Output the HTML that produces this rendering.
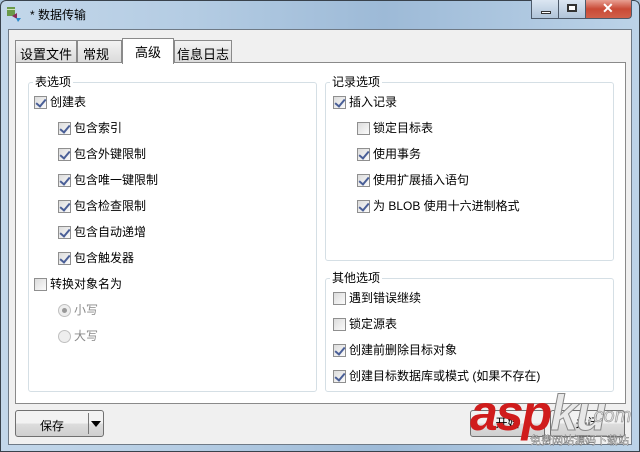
<!DOCTYPE html>
<html><head><meta charset="utf-8"><style>
*{margin:0;padding:0;box-sizing:border-box}
body{width:640px;height:452px;overflow:hidden;background:#a9c4dc;font-family:"Liberation Sans","Noto Sans CJK SC",sans-serif;font-size:12px;color:#000;position:relative}
.abs{position:absolute}
#win{left:0;top:0;width:640px;height:452px;background:linear-gradient(90deg,#c3d7ea 0%,#b4cce3 30%,#9dbad7 60%,#bcd3e8 100%);border:1px solid #39424c;border-radius:6px 6px 0 0}
#client{left:8px;top:29px;width:624px;height:416px;background:#f0f0f0;border:1px solid #6f7a86}
.tab{position:absolute;top:40px;height:23px;background:linear-gradient(#f3f3f3,#dadada);border:1px solid #8a8a8a;border-bottom:none;padding-top:3px;text-align:center;font-size:13px;white-space:nowrap}
#panel{left:15px;top:62px;width:611px;height:342px;background:#fff;border:1px solid #8a8a8a}
.grp{position:absolute;border:1px solid #d5dfe5;border-radius:3px}
.gl{position:absolute;background:#fff;padding:0 2px;font-size:12px;line-height:14px}
.cb{position:absolute;width:13px;height:13px;border:1px solid #8f8f8f;background:linear-gradient(135deg,#dcdcdc,#fbfbfb)}
.cb.c::after{content:"";position:absolute;left:3px;top:0px;width:4px;height:8px;border:solid #4a5f97;border-width:0 2px 2px 0;transform:rotate(40deg)}
.lb{position:absolute;font-size:12px;line-height:14px;white-space:nowrap}
.rd{position:absolute;width:13px;height:13px;border-radius:50%;border:1px solid #c0c0c0;background:#eee}
.btn{position:absolute;border:1px solid #707070;border-radius:3px;background:linear-gradient(#f2f2f2 50%,#dddddd 50%,#cfcfcf);font-size:12px;text-align:center}
.wb{position:absolute;top:0;height:19px;border:1px solid #4d5a6a;border-top:none}
</style></head><body>
<div id="win" class="abs"></div>
<svg class="abs" style="left:6px;top:6px" width="18" height="18"><rect x="1" y="1" width="8" height="9" fill="#6a9a4a"/><rect x="1" y="3" width="8" height="1" fill="#cfe3b5"/><path d="M6 10l5-3v6z" fill="#8a2a5a"/><path d="M10 12h5l-3 4z" fill="#2a8acb"/></svg>
<div class="abs" style="left:30px;top:6px;font-size:12px">* 数据传输</div>
<div class="wb" style="left:531px;width:28px;background:linear-gradient(#dbe6f2,#b0c4d9)"><div class="abs" style="left:9px;top:11px;width:10px;height:3px;border:1px solid #333;background:#fff"></div></div>
<div class="wb" style="left:559px;width:27px;border-left:none;background:linear-gradient(#dbe6f2,#b0c4d9)"><div class="abs" style="left:8px;top:4px;width:10px;height:8px;border:2px solid #333;background:#fff"></div></div>
<div class="wb" style="left:586px;width:46px;border-left:none;border-radius:0 0 4px 0;background:linear-gradient(#e8a093,#c94a36 50%,#d0604a)"><div class="abs" style="left:16px;top:0;color:#fff;font-weight:bold;font-size:14px">✕</div></div>
<div id="client" class="abs"></div>
<div class="tab" style="left:15px;width:62px">设置文件</div>
<div class="tab" style="left:77px;width:45px;text-align:left;padding-left:5px">常规</div>
<div class="tab" style="left:174px;width:58px">信息日志</div>
<div id="panel" class="abs"></div>
<div class="tab" style="left:122px;top:38px;width:52px;height:26px;background:#fff;padding:3px 0 0 0;z-index:2">高级</div>

<div class="grp" style="left:28px;top:82px;width:289px;height:310px"></div>
<div class="gl" style="left:33px;top:75px">表选项</div>
<div class="grp" style="left:325px;top:82px;width:289px;height:179px"></div>
<div class="gl" style="left:330px;top:75px">记录选项</div>
<div class="grp" style="left:325px;top:278px;width:289px;height:114px"></div>
<div class="gl" style="left:330px;top:271px">其他选项</div>

<div class="cb c" style="left:34px;top:96px"></div><div class="lb" style="left:50px;top:95px">创建表</div>
<div class="cb c" style="left:58px;top:122px"></div><div class="lb" style="left:74px;top:121px">包含索引</div>
<div class="cb c" style="left:58px;top:148px"></div><div class="lb" style="left:74px;top:147px">包含外键限制</div>
<div class="cb c" style="left:58px;top:174px"></div><div class="lb" style="left:74px;top:173px">包含唯一键限制</div>
<div class="cb c" style="left:58px;top:200px"></div><div class="lb" style="left:74px;top:199px">包含检查限制</div>
<div class="cb c" style="left:58px;top:226px"></div><div class="lb" style="left:74px;top:225px">包含自动递增</div>
<div class="cb c" style="left:58px;top:252px"></div><div class="lb" style="left:74px;top:251px">包含触发器</div>
<div class="cb" style="left:34px;top:278px"></div><div class="lb" style="left:50px;top:277px">转换对象名为</div>
<div class="rd" style="left:58px;top:304px"><div class="abs" style="left:3px;top:3px;width:5px;height:5px;border-radius:50%;background:#999"></div></div><div class="lb" style="left:74px;top:303px;color:#8a8a8a">小写</div>
<div class="rd" style="left:58px;top:330px"></div><div class="lb" style="left:74px;top:329px;color:#8a8a8a">大写</div>

<div class="cb c" style="left:333px;top:96px"></div><div class="lb" style="left:349px;top:95px">插入记录</div>
<div class="cb" style="left:357px;top:122px"></div><div class="lb" style="left:373px;top:121px">锁定目标表</div>
<div class="cb c" style="left:357px;top:148px"></div><div class="lb" style="left:373px;top:147px">使用事务</div>
<div class="cb c" style="left:357px;top:174px"></div><div class="lb" style="left:373px;top:173px">使用扩展插入语句</div>
<div class="cb c" style="left:357px;top:200px"></div><div class="lb" style="left:373px;top:199px">为 BLOB 使用十六进制格式</div>

<div class="cb" style="left:333px;top:292px"></div><div class="lb" style="left:349px;top:291px">遇到错误继续</div>
<div class="cb" style="left:333px;top:318px"></div><div class="lb" style="left:349px;top:317px">锁定源表</div>
<div class="cb c" style="left:333px;top:344px"></div><div class="lb" style="left:349px;top:343px">创建前删除目标对象</div>
<div class="cb c" style="left:333px;top:370px"></div><div class="lb" style="left:349px;top:369px">创建目标数据库或模式 (如果不存在)</div>

<div class="btn" style="left:15px;top:410px;width:89px;height:27px"><span class="abs" style="left:24px;top:6px">保存</span><div class="abs" style="left:72px;top:2px;width:1px;height:21px;background:#777"></div><div class="abs" style="left:75px;top:10px;border:5px solid transparent;border-top:6px solid #000"></div></div>
<div class="btn" style="left:470px;top:410px;width:75px;height:27px;line-height:25px">开始</div>
<div class="btn" style="left:550px;top:410px;width:75px;height:27px;line-height:25px">关闭</div>
<div class="abs" style="left:470px;top:388px;font:italic bold 50px 'Liberation Sans',sans-serif;color:#d01c1c;letter-spacing:-2px;line-height:50px">asp<span style="color:#e8e8e8;-webkit-text-stroke:1px #888">ku</span></div>
<div class="abs" style="left:588px;top:405px;font:italic 20px 'Liberation Sans',sans-serif;color:#ddd;-webkit-text-stroke:0.5px #888">.com</div>
<div class="abs" style="left:530px;top:432px;font-size:11px;color:#fff;-webkit-text-stroke:0.4px #666">免费网站源码下载站</div>
</body></html>
